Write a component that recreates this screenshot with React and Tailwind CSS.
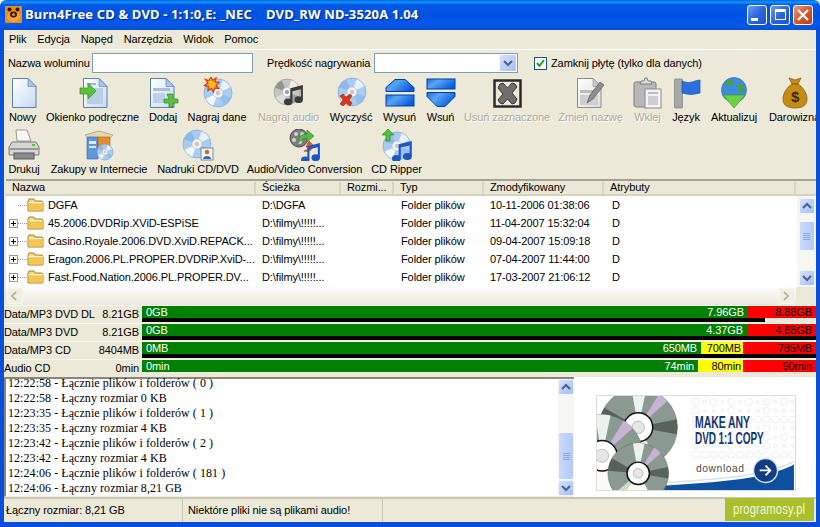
const font = "font-['Liberation_Sans',Arial,sans-serif]";

// wedge sectors for the disc drawings
function wedge(cx, cy, r, a0, a1) {
  const p = (a) => `${(cx + r * Math.cos((a * Math.PI) / 180)).toFixed(2)} ${(cy + r * Math.sin((a * Math.PI) / 180)).toFixed(2)}`;
  return `M${cx} ${cy}L${p(a0)}A${r} ${r} 0 0 1 ${p(a1)}Z`;
}

function Disc({ cx = 16, cy = 16, r = 14, base = "#a9cdf2", grey }) {
  const wedges = grey ? ["#f4f4f4", "#9a9a9a", "#e0e0e0", "#8a8a8a"] : ["#f2f8ff", "#8fbcee", "#ffffff", "#8ab6ea"];
  return (
    <g>
      <circle cx={cx} cy={cy} r={r} fill={grey ? "#c4c4c4" : base} stroke={grey ? "#8f8f8f" : "#7c9fcc"} strokeWidth="0.6" />
      {wedges.map((c, i) => (
        <path key={i} d={wedge(cx, cy, r - 0.5, i * 90 - 70, i * 90 - 25)} fill={c} opacity="0.85" />
      ))}
      <circle cx={cx} cy={cy} r={r * 0.36} fill="#f2f2f2" stroke="#b5b5b5" strokeWidth="0.6" />
      <circle cx={cx} cy={cy} r={r * 0.16} fill={grey ? "#9c9c9c" : "#c9c9c9"} />
    </g>
  );
}

function Ico({ children }) {
  return (
    <svg width="32" height="32" viewBox="0 0 32 32">
      {children}
    </svg>
  );
}

function Page({ x = 4, grey }) {
  const stroke = grey ? "#8d8d8d" : "#5b7fb4";
  return (
    <g transform={`translate(${x} 1)`}>
      <defs>
        <linearGradient id={grey ? "pg" : "pb"} x1="0" y1="0" x2="1" y2="1">
          <stop offset="0" stopColor="#ffffff" />
          <stop offset="1" stopColor={grey ? "#dcdcdc" : "#c6daf5"} />
        </linearGradient>
      </defs>
      <path d="M.5.5H16l8 8v21H.5z" fill={`url(#${grey ? "pg" : "pb"})`} stroke={stroke} />
      <path d="M16 .5v8h8z" fill={grey ? "#c9c9c9" : "#a9c4ea"} stroke={stroke} strokeWidth="0.6" />
    </g>
  );
}

function Note({ x = 0, y = 0, s = 1, c = "#333" }) {
  return (
    <g transform={`translate(${x} ${y}) scale(${s})`} fill={c}>
      <ellipse cx="4" cy="16" rx="4" ry="3.2" />
      <ellipse cx="14" cy="14" rx="4" ry="3.2" />
      <path d="M6 16V3L18 0v14h-2V4L8 6v10z" />
    </g>
  );
}

const IconNew = () => <Ico><Page x={5} /></Ico>;
const IconPanel = () => (
  <Ico>
    <Page x={6} />
    <rect x="10" y="11" width="16" height="16" fill="#b9cee9" />
    <rect x="10" y="6" width="9" height="2" fill="#9db6d8" />
    <path d="M3 11h8V6l8 8-8 8v-5H3z" fill="#5cc23a" stroke="#3a8f20" strokeWidth="0.7" />
  </Ico>
);
const IconAdd = () => (
  <Ico>
    <Page x={3} />
    <rect x="6" y="11" width="17" height="3" fill="#a8bedd" />
    <rect x="6" y="16" width="12" height="10" fill="#bcd0ea" />
    <path d="M21 18h4v-0h2v5h5v4h-5v4h-4v-4h-5v-4h5z" transform="translate(-1 -1)" fill="#5cc23a" stroke="#2f8a1f" strokeWidth="0.7" />
  </Ico>
);
const IconBurn = () => (
  <Ico>
    <Disc cx={17} cy={16} r={14} />
    <path d="M10 0l1.500 3.500L15 1l-1 4 4 .5-3 3 2.500 3-4-.5L12.500 15 10.500 11.500 7 13.500l.5-4-4-1L7 6 4.500 2.500 8 3.500z" fill="#f4c21d" stroke="#e63b14" strokeWidth="1.300" />
  </Ico>
);
const IconAudio = () => (
  <Ico>
    <Disc cx={14} cy={15} r={13} grey />
    <Note x={11} y={8} s={1.05} c="#3b3b3b" />
  </Ico>
);
const IconClear = () => (
  <Ico>
    <Disc cx={17} cy={15} r={14} />
    <path d="M5 19l3-2 3 3 4-3 2 2-3 4 3 3-2 3-4-3-3 3-3-2 3-4z" fill="#d9371c" stroke="#9c1f0c" strokeWidth="0.6" />
  </Ico>
);
const IconEject = () => (
  <Ico>
    <defs>
      <linearGradient id="bl" x1="0" x2="1" y1="0" y2="0.500">
        <stop offset="0" stopColor="#1d6fdc" />
        <stop offset="0.400" stopColor="#58a5f5" />
        <stop offset="1" stopColor="#0a5fe0" />
      </linearGradient>
    </defs>
    <path d="M11 2.500h10l9 8v4H2v-4z" fill="url(#bl)" stroke="#0a3c9e" />
    <rect x="2" y="18" width="28" height="11" fill="url(#bl)" stroke="#0a3c9e" />
  </Ico>
);
const IconInsert = () => (
  <Ico>
    <rect x="2" y="2" width="28" height="10" fill="url(#bl)" stroke="#0a3c9e" />
    <path d="M2 15.500h28v4l-10 10h-8l-10-10z" fill="url(#bl)" stroke="#0a3c9e" />
  </Ico>
);
const IconRemove = () => (
  <Ico>
    <rect x="3.500" y="3.500" width="26" height="26" fill="#ece9d8" stroke="#2a2a2a" strokeWidth="2.500" />
    <path d="M9 7l3-1 4.500 5L21 6l3 1 2 3-5 6 5 6-2 4-3 1-4.500-5-4.500 5-3-1-2-3 5-6-5-6z" fill="#6e6e6e" stroke="#333" />
  </Ico>
);
const IconRename = () => (
  <Ico>
    <Page x={2} grey />
    <rect x="5" y="13" width="15" height="3" fill="#bdbdbd" />
    <rect x="5" y="18" width="18" height="10" fill="#cfcfcf" />
    <path d="M12 26l3-8L25 5l4 3-11 14z" fill="#8f8f8f" stroke="#5a5a5a" strokeWidth="0.7" />
  </Ico>
);
const IconPaste = () => (
  <Ico>
    <rect x="2" y="5" width="22" height="25" rx="2" fill="#b8b8b8" stroke="#808080" />
    <path d="M8 7l1-3h3l1-3h2l1 3h3l1 3z" fill="#dedede" stroke="#7d7d7d" />
    <rect x="13" y="12" width="16" height="19" fill="#f3f3f3" stroke="#8a8a8a" />
    <rect x="16" y="15" width="10" height="2" fill="#bbb" />
    <rect x="16" y="19" width="10" height="9" fill="#cfcfcf" />
  </Ico>
);
const IconFlag = () => (
  <Ico>
    <rect x="4.500" y="2" width="8" height="29" rx="1" fill="#a8a8a8" stroke="#727272" strokeWidth="0.6" />
    <path d="M12 4c5 2 8 2 13 0l5-1v13l-5 1c-5 1-8 0-13-1z" fill="#2a70dc" stroke="#1a4ea8" strokeWidth="0.7" />
  </Ico>
);
const IconUpdate = () => (
  <Ico>
    <circle cx="16" cy="13" r="12.500" fill="#3e8be0" stroke="#27629e" strokeWidth="0.6" />
    <path d="M7 6c3-3 7-4 9-2l-2 4-5 1zM20 6l5 3 2 6-5 0-3-5z" fill="#4aa03c" />
    <path d="M5 18h22L16 31z" fill="#6fd043" stroke="#3c9a24" strokeWidth="0.7" />
  </Ico>
);
const IconMoney = () => (
  <Ico>
    <path d="M10 1l6 2 6-2-3 6h-6z" fill="#c98d12" stroke="#7f5708" strokeWidth="0.7" />
    <path d="M13 7h6c6 4 9 10 9 15 0 6-4 9-12 9S4 28 4 22c0-5 3-11 9-15z" fill="#c58c14" stroke="#7f5708" strokeWidth="0.7" />
    <text x="16" y="25" textAnchor="middle" fontSize="15" fontWeight="700" fontFamily="Liberation Sans" fill="#3a2a08">$</text>
  </Ico>
);
const IconPrint = () => (
  <Ico>
    <path d="M8 1h11l4 11H9z" fill="#f6f6f6" stroke="#9a9a9a" />
    <path d="M4 13h24l3 5v8H1v-8z" fill="#d5d5d5" stroke="#7a7a7a" />
    <rect x="1" y="19" width="30" height="2" fill="#9a9a9a" />
    <rect x="6" y="24" width="20" height="6" fill="#8b8b8b" stroke="#5d5d5d" />
    <rect x="24" y="15" width="3" height="2" fill="#59c342" />
  </Ico>
);
const IconShop = () => (
  <Ico>
    <path d="M2 6l14-4 14 4-3 3H5z" fill="#e6d8a8" stroke="#8f8a70" strokeWidth="0.6" />
    <path d="M4 8h11v22H4z" fill="#5f97dc" stroke="#33619e" strokeWidth="0.6" />
    <path d="M15 8h12v12H15z" fill="#e58c2c" stroke="#a65f14" strokeWidth="0.6" />
    <path d="M6 12h7v3H6zM6 17h7v2H6z" fill="#d9e7f8" />
    <Disc cx={22} cy={23} r={8} />
  </Ico>
);
const IconLabel = () => (
  <Ico>
    <Disc cx={15} cy={15} r={14} />
    <rect x="19" y="19" width="12" height="12" fill="#f1f1f1" stroke="#7c8ba6" />
    <circle cx="25" cy="23" r="2.300" fill="#b9772e" />
    <path d="M21 30c0-4 8-4 8 0z" fill="#2f6ab5" />
  </Ico>
);
const IconConvert = () => (
  <Ico>
    <circle cx="10" cy="9" r="9" fill="#7d7d7d" stroke="#4b4b4b" />
    <circle cx="7" cy="5" r="2" fill="#d3d3d3" />
    <circle cx="13" cy="5" r="2" fill="#d3d3d3" />
    <circle cx="5" cy="11" r="2" fill="#d3d3d3" />
    <circle cx="11" cy="13" r="2" fill="#d3d3d3" />
    <path d="M9 14c0-6 4-9 9-9V1l7 6-7 6V9c-3 0-6 2-9 5z" fill="#4fbf3f" stroke="#2b7f20" strokeWidth="0.6" />
    <path d="M20 12l6 6-3 1c-1 3-4 4-8 3 3-1 5-2 5-4l-3 0z" fill="#ea5a20" stroke="#a8360b" strokeWidth="0.6" />
    <Note x={12} y={14} s={1.050} c="#1f56c4" />
  </Ico>
);
const IconRip = () => (
  <Ico>
    <Disc cx={16} cy={17} r={14} />
    <path d="M7 0l6 6H9v6H5V6H1z" fill="#56c13a" stroke="#2f8a1f" strokeWidth="0.7" />
    <Note x={11} y={12} s={1.100} c="#1f56c4" />
  </Ico>
);

const row1 = [
  { label: "Nowy", w: "w-[37px]", Icon: IconNew },
  { label: "Okienko podręczne", w: "w-[103px]", Icon: IconPanel },
  { label: "Dodaj", w: "w-[38px]", Icon: IconAdd },
  { label: "Nagraj dane", w: "w-[70px]", Icon: IconBurn },
  { label: "Nagraj audio", w: "w-[73px]", Icon: IconAudio, off: true },
  { label: "Wyczyść", w: "w-[52px]", Icon: IconClear },
  { label: "Wysuń", w: "w-[45px]", Icon: IconEject },
  { label: "Wsuń", w: "w-[37px]", Icon: IconInsert },
  { label: "Usuń zaznaczone", w: "w-[96px]", Icon: IconRemove, off: true },
  { label: "Zmień nazwę", w: "w-[71px]", Icon: IconRename, off: true },
  { label: "Wklej", w: "w-[43px]", Icon: IconPaste, off: true },
  { label: "Język", w: "w-[34px]", Icon: IconFlag },
  { label: "Aktualizuj", w: "w-[62px]", Icon: IconUpdate },
  { label: "Darowizna", w: "w-[59px]", Icon: IconMoney },
];

const row2 = [
  { label: "Drukuj", w: "w-[40px]", Icon: IconPrint },
  { label: "Zakupy w Internecie", w: "w-[110px]", Icon: IconShop },
  { label: "Nadruki CD/DVD", w: "w-[88px]", Icon: IconLabel },
  { label: "Audio/Video Conversion", w: "w-[125px]", Icon: IconConvert },
  { label: "CD Ripper", w: "w-[59px]", Icon: IconRip },
];

function ToolRow({ items, className }) {
  return (
    <div className={`flex overflow-hidden ${className}`}>
      {items.map(({ label, w, Icon, off }) => (
        <div key={label} className={`${w} shrink-0 flex flex-col items-center`}>
          <Icon />
          <span
            className={`whitespace-nowrap leading-[14px] mt-[1px] ${off ? "text-[#aca899] [text-shadow:1px_1px_0_#fff]" : "text-black"}`}
          >
            {label}
          </span>
        </div>
      ))}
    </div>
  );
}

function Chevron({ dir }) {
  const d = { up: "M2 7l4-4 4 4", down: "M2 3l4 4 4-4", left: "M7 1L3 5l4 4", right: "M3 1l4 4-4 4" }[dir];
  return (
    <svg width="12" height="10" viewBox="0 0 12 10">
      <path d={d} fill="none" stroke={dir === "left" || dir === "right" ? "#b8b5a4" : "#4d6185"} strokeWidth="2" />
    </svg>
  );
}

function ScrollBtn({ dir, className = "" }) {
  return (
    <div className={`w-[16px] h-[16px] shrink-0 flex items-center justify-center rounded-[2px] border border-[#eef3fe] bg-gradient-to-br from-[#d6e2fd] to-[#a3bff5] ${className}`}>
      <Chevron dir={dir} />
    </div>
  );
}

function Thumb({ className }) {
  return (
    <div className={`w-[16px] rounded-[2px] border border-[#f4f7fe] bg-gradient-to-r from-[#cbdafb] to-[#b2c9f8] flex flex-col items-center justify-center gap-[1px] ${className}`}>
      <div className="w-[7px] h-[1px] bg-[#8fa8dc]" />
      <div className="w-[7px] h-[1px] bg-[#8fa8dc]" />
      <div className="w-[7px] h-[1px] bg-[#8fa8dc]" />
      <div className="w-[7px] h-[1px] bg-[#8fa8dc]" />
    </div>
  );
}

function Folder() {
  return (
    <svg width="17" height="14" viewBox="0 0 17 14">
      <path d="M1 3l1-2h5l1 2h7l1 1v9H1z" fill="#f8d887" stroke="#9a7426" strokeWidth="0.9" />
      <path d="M1.500 5.500h14.500v7H1.500z" fill="#f4c551" />
      <path d="M1.500 4.500h14.500" stroke="#fff3c9" />
    </svg>
  );
}

function Tree({ plus }) {
  return (
    <div className="w-[18px] h-[18px] flex items-center shrink-0">
      {plus ? (
        <div className="w-[9px] h-[9px] border border-[#919b9c] bg-white flex items-center justify-center relative shrink-0">
          <div className="w-[5px] h-[1px] bg-black" />
          <div className="absolute w-[1px] h-[5px] bg-black" />
        </div>
      ) : (
        <div className="w-[9px] shrink-0" />
      )}
      <div className="w-[9px] border-t border-dotted border-[#9a9a9a]" />
    </div>
  );
}

const files = [
  { name: "DGFA", path: "D:\\DGFA", date: "10-11-2006 01:38:06" },
  { name: "45.2006.DVDRip.XViD-ESPiSE", path: "D:\\filmy\\!!!!!...", date: "11-04-2007 15:32:04", plus: true },
  { name: "Casino.Royale.2006.DVD.XviD.REPACK...", path: "D:\\filmy\\!!!!!...", date: "09-04-2007 15:09:18", plus: true },
  { name: "Eragon.2006.PL.PROPER.DVDRiP.XviD-...", path: "D:\\filmy\\!!!!!...", date: "07-04-2007 11:44:00", plus: true },
  { name: "Fast.Food.Nation.2006.PL.PROPER.DV...", path: "D:\\filmy\\!!!!!...", date: "17-03-2007 21:06:12", plus: true },
];

const columns = [
  { label: "Nazwa", w: "w-[250px]" },
  { label: "Ścieżka", w: "w-[85px]" },
  { label: "Rozmi...", w: "w-[53px]" },
  { label: "Typ", w: "w-[90px]" },
  { label: "Zmodyfikowany", w: "w-[120px]" },
  { label: "Atrybuty", w: "w-[192px]" },
];

const bars = [
  { name: "Data/MP3 DVD DL", size: "8.21GB", left: "0GB", green: "7.96GB", red: "8.88GB", redW: "w-[68px]", track: "w-[623px]" },
  { name: "Data/MP3 DVD", size: "8.21GB", left: "0GB", green: "4.37GB", red: "4.88GB", redW: "w-[69px]", track: "w-full" },
  { name: "Data/MP3 CD", size: "8404MB", left: "0MB", green: "650MB", yellow: "700MB", yellowW: "w-[42px]", red: "785MB", redW: "w-[73px]", track: "w-full" },
  { name: "Audio CD", size: "0min", left: "0min", green: "74min", yellow: "80min", yellowW: "w-[45px]", red: "90min", redW: "w-[73px]" },
];

const log = [
  "12:22:58 - Łącznie plików i folderów ( 0 )",
  "12:22:58 - Łączny rozmiar 0 KB",
  "12:23:35 - Łącznie plików i folderów ( 1 )",
  "12:23:35 - Łączny rozmiar 4 KB",
  "12:23:42 - Łącznie plików i folderów ( 2 )",
  "12:23:42 - Łączny rozmiar 4 KB",
  "12:24:06 - Łącznie plików i folderów ( 181 )",
  "12:24:06 - Łączny rozmiar 8,21 GB",
];

function Banner() {
  const dots = [];
  for (let x = 100; x < 200; x += 9) for (let y = 6; y < 66; y += 9) dots.push([x, y, (x * y) % 4 === 0 ? 3.500 : 1.500]);
  const disc = (cx, cy, r, key) => (
    <g key={key}>
      <circle cx={cx} cy={cy} r={r} fill="#8b9a90" stroke="#5c685f" strokeWidth="0.5" />
      <path d={wedge(cx, cy, r, -100, -78)} fill="#eef2ee" />
      <path d={wedge(cx, cy, r, -58, -42)} fill="#c7b3d4" />
      <path d={wedge(cx, cy, r, 60, 125)} fill="#fbfbf4" />
      <path d={wedge(cx, cy, r, 125, 140)} fill="#c7dfc2" />
      <path d={wedge(cx, cy, r, -175, -150)} fill="#56615a" />
      <path d={wedge(cx, cy, r, -12, 10)} fill="#59635c" />
      <circle cx={cx} cy={cy} r={r * 0.37} fill="#fff" stroke="#111" strokeWidth="1.500" />
      <circle cx={cx} cy={cy} r={r * 0.16} fill="#e6e6e6" stroke="#888" strokeWidth="0.5" />
    </g>
  );
  return (
    <svg width="200" height="96" viewBox="0 0 200 96" className="border border-[#dcdcdc] box-border shrink-0">
      <rect width="200" height="96" fill="#fff" />
      {dots.map(([x, y, r]) => (
        <circle key={`${x}-${y}`} cx={x} cy={y} r={r} fill="none" stroke="#e4e6ea" strokeWidth="0.7" />
      ))}
      <path d="M60 92c50-3 110-6 140-22v26H60z" fill="#0f4f9f" />
      <path d="M60 89c50-3 110-6 140-22" fill="none" stroke="#d5e3f1" strokeWidth="1.500" />
      {disc(41, 32, 40, "a")}
      {disc(4, 61, 42, "b")}
      {disc(41, 79, 31, "c")}
      <text x="99" y="33" fontFamily="Liberation Sans" fontWeight="700" fontSize="16" fill="#14376f" textLength="56" lengthAdjust="spacingAndGlyphs">MAKE ANY</text>
      <text x="99" y="49" fontFamily="Liberation Sans" fontWeight="700" fontSize="16" fill="#14376f" textLength="70" lengthAdjust="spacingAndGlyphs">DVD 1:1 COPY</text>
      <text x="100" y="78" fontFamily="Liberation Sans" fontSize="10.500" fill="#4b4b4b" textLength="49">download</text>
      <circle cx="171" cy="76" r="13" fill="#cfe2f2" />
      <circle cx="171" cy="76" r="11.500" fill="#123d85" />
      <path d="M165 76h10M171 71l5 5-5 5" fill="none" stroke="#fff" strokeWidth="1.800" />
    </svg>
  );
}

function WinBtn({ children, red }) {
  return (
    <div
      className={`w-[20px] h-[20px] rounded-[3px] border border-white flex items-center justify-center ${
        red ? "bg-gradient-to-br from-[#e69a80] via-[#d8572f] to-[#c13a12]" : "bg-gradient-to-br from-[#6f9bf4] via-[#2f66dc] to-[#2250c8]"
      }`}
    >
      {children}
    </div>
  );
}

export default function App() {
  return (
    <div className={`${font} text-[11px] tracking-[-0.1px] w-[820px] h-[527px] overflow-hidden flex flex-col relative bg-white rounded-t-[6px]`}>
      <div className="h-[30px] shrink-0 flex items-center pl-[5px] pr-[7px] pb-[1px] bg-[linear-gradient(180deg,#0a5be0_0%,#0a9bff_7%,#0558e6_16%,#0052e4_50%,#0458ec_80%,#0450d0_100%)]">
        <svg width="17" height="17" viewBox="0 0 17 17" className="shrink-0">
          <rect width="17" height="17" rx="1" fill="#ef8a12" />
          <ellipse cx="8.500" cy="11" rx="6.500" ry="5" fill="#f6a53a" />
          <circle cx="4.500" cy="3.500" r="2" fill="#2b1a08" />
          <circle cx="12.500" cy="3.500" r="2" fill="#2b1a08" />
          <ellipse cx="8.500" cy="8.500" rx="3.500" ry="3" fill="#2b1a08" />
          <circle cx="8.500" cy="8.500" r="1.500" fill="#ef8a12" />
        </svg>
        <span className="ml-[3px] text-white font-['Noto_Sans',sans-serif] font-bold text-[13px] tracking-[0.14px] whitespace-pre [text-shadow:1px_1px_1px_#0a2a80]">
          Burn4Free CD &amp; DVD - 1:1:0,E: _NEC    DVD_RW ND-3520A 1.04
        </span>
        <div className="ml-auto flex gap-[3px]">
          <WinBtn>
            <div className="w-[7px] h-[3px] bg-white mt-[9px] mr-[5px]" />
          </WinBtn>
          <WinBtn>
            <div className="w-[11px] h-[11px] border border-white border-t-[3px]" />
          </WinBtn>
          <WinBtn red>
            <svg width="12" height="12" viewBox="0 0 12 12">
              <path d="M1 1l10 10M11 1L1 11" stroke="#fff" strokeWidth="2.200" />
            </svg>
          </WinBtn>
        </div>
      </div>

      <div className="flex-1 min-h-0 flex flex-col border-x-4 border-b-[5px] border-[#0a4fdc] bg-[#ece9d8] text-black">
        <div className="h-[20px] shrink-0 flex items-center gap-[11px] pl-[5px] pb-[1px] border-b border-white">
          <span>Plik</span>
          <span>Edycja</span>
          <span>Napęd</span>
          <span>Narzędzia</span>
          <span>Widok</span>
          <span>Pomoc</span>
        </div>

        <div className="h-[26px] shrink-0 flex items-center pl-[4px]">
          <span className="w-[84px] whitespace-nowrap">Nazwa woluminu</span>
          <div className="w-[161px] h-[20px] bg-white border border-[#7f9db9]" />
          <span className="ml-[14px] w-[107px] whitespace-nowrap">Prędkość nagrywania</span>
          <div className="w-[144px] h-[20px] bg-white border border-[#7f9db9] flex justify-end p-[1px]">
            <div className="w-[16px] rounded-[1px] bg-gradient-to-br from-[#d6e2fd] to-[#a3bff5] flex items-center justify-center">
              <Chevron dir="down" />
            </div>
          </div>
          <div className="ml-[16px] w-[13px] h-[13px] bg-white border border-[#1c5180] flex items-center justify-center">
            <svg width="9" height="9" viewBox="0 0 9 9">
              <path d="M1 4l2.500 3L8 1" fill="none" stroke="#21a121" strokeWidth="2" />
            </svg>
          </div>
          <span className="ml-[4px] whitespace-nowrap">Zamknij płytę (tylko dla danych)</span>
        </div>

        <ToolRow items={row1} className="h-[52px] shrink-0 pt-[1px]" />
        <ToolRow items={row2} className="h-[51px] shrink-0 pt-[1px]" />

        <div className="h-[125px] shrink-0 ml-[2px] flex flex-col border-t-2 border-[#a5a294]">
          <div className="h-[15px] shrink-0 flex items-center bg-[#ebe8d8] border-b-2 border-[#d5d2c0]">
            {columns.map((c) => (
              <div key={c.label} className={`${c.w} shrink-0 h-[12px] flex items-center pl-[6px] border-r-2 border-[#d8d5c4] whitespace-nowrap`}>
                {c.label}
              </div>
            ))}
          </div>
          <div className="h-[91px] shrink-0 flex bg-white">
            <div className="flex-1 min-w-0 pl-[3px]">
              {files.map((f) => (
                <div key={f.name} className="h-[18px] flex items-center">
                  <Tree plus={f.plus} />
                  <Folder />
                  <span className="ml-[4px] w-[214px] whitespace-nowrap overflow-hidden shrink-0">{f.name}</span>
                  <span className="w-[139px] shrink-0">{f.path}</span>
                  <span className="w-[89px] shrink-0">Folder plików</span>
                  <span className="w-[122px] shrink-0">{f.date}</span>
                  <span>D</span>
                </div>
              ))}
            </div>
            <div className="w-[19px] shrink-0 bg-[#f7f7f2] flex flex-col items-center pt-[2px] pb-[1px]">
              <ScrollBtn dir="up" />
              <Thumb className="h-[30px] mt-[7px]" />
              <ScrollBtn dir="down" className="mt-auto" />
            </div>
          </div>
          <div className="h-[17px] shrink-0 flex">
            <div className="flex-1 flex justify-between items-center px-[1px] bg-gradient-to-b from-[#fdfdfa] to-[#ecebe0]">
              <div className="w-[16px] h-[16px] flex items-center justify-center rounded-[2px] border border-[#f5f4ee] bg-[#f1efe4]">
                <Chevron dir="left" />
              </div>
              <div className="w-[16px] h-[16px] flex items-center justify-center rounded-[2px] border border-[#f5f4ee] bg-[#f1efe4]">
                <Chevron dir="right" />
              </div>
            </div>
            <div className="w-[20px] bg-[#ece9d8]" />
          </div>
        </div>

        <div className="h-[72px] shrink-0 mt-[1px] flex flex-col">
          {bars.map((b) => (
            <div key={b.name} className="h-[18px] shrink-0 flex border-t border-[#f8f7f0]">
              <div className="w-[136px] shrink-0 flex justify-between items-center pr-[1px] pb-[1px]">
                <span>{b.name}</span>
                <span>{b.size}</span>
              </div>
              <div className="flex-1 ml-[2px] flex flex-col">
                <div className="h-[12px] shrink-0 flex leading-[12px]">
                  <div className="flex-1 flex justify-between bg-[#008000] text-white pl-[4px] pr-[4px]">
                    <span>{b.left}</span>
                    <span>{b.green}</span>
                  </div>
                  {b.yellow && (
                    <div className={`${b.yellowW} shrink-0 bg-[#ffff00] text-right pr-[2px]`}>{b.yellow}</div>
                  )}
                  <div className={`${b.redW} shrink-0 bg-[#ff0000] text-right pr-[4px]`}>{b.red}</div>
                </div>
                {b.track && <div className={`h-[4px] ${b.track} bg-black`} />}
              </div>
            </div>
          ))}
        </div>

        <div className="flex-1 min-h-0 flex bg-white">
          <div className="w-[570px] shrink-0 flex border-t-2 border-l-2 border-[#8a8778] border-r-0 border-b border-b-[#f1efe2]">
            <div className="flex-1 min-w-0 overflow-hidden pl-[2px] -mt-[3px] font-['Liberation_Serif',serif] text-[12px] tracking-[0.06px] leading-[15px]">
              {log.map((l, i) => (
                <div key={i} className="whitespace-nowrap">{l}</div>
              ))}
            </div>
            <div className="w-[16px] shrink-0 bg-[#f7f7f2] flex flex-col">
              <ScrollBtn dir="up" />
              <Thumb className="h-[48px] mt-auto" />
              <ScrollBtn dir="down" />
            </div>
          </div>
          <div className="flex-1 flex justify-start pt-[18px] pl-[22px]">
            <Banner />
          </div>
        </div>

        <div className="h-[25px] shrink-0 flex items-center border-t-2 border-[#c9c6b6]">
          <div className="w-[179px] h-full flex items-center pl-[2px] border-r border-[#c9c6b6]">Łączny rozmiar: 8,21 GB</div>
          <div className="w-[200px] h-full flex items-center pl-[5px] border-r border-[#c9c6b6]">Niektóre pliki nie są plikami audio!</div>
        </div>
      </div>

      <div className="absolute left-[725px] top-[498px] w-[89px] h-[23px] bg-[#a9c02c] text-[#f2f6d8] text-[14px] tracking-[0.2px] flex items-center justify-center">
        <span className="scale-x-[0.8] whitespace-nowrap">programosy.pl</span>
      </div>
    </div>
  );
}
